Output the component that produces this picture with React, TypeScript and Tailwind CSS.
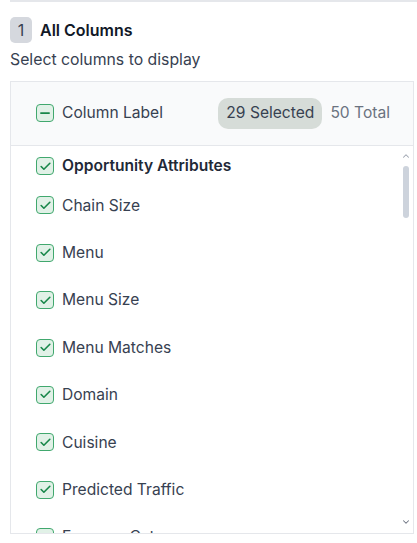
import { Check, Minus, ChevronUp, ChevronDown } from "lucide-react";

const items = [
  "Chain Size",
  "Menu",
  "Menu Size",
  "Menu Matches",
  "Domain",
  "Cuisine",
  "Predicted Traffic",
  "Expense Category",
];

function Box({ mixed }: { mixed?: boolean }) {
  return (
    <span className="flex h-[18px] w-[18px] shrink-0 items-center justify-center rounded-[4px] border border-[#41a86e] bg-[#e1f1e7] text-[#18874a]">
      {mixed ? (
        <Minus size={14} strokeWidth={3} />
      ) : (
        <Check size={13} strokeWidth={3} />
      )}
    </span>
  );
}

export default function App() {
  return (
    <div className="min-h-screen bg-white font-['Inter',sans-serif] text-[#1f2937]">
      <div className="ml-[10px] h-[3px] border-t-2 border-[#e5e7eb]" />

      <div className="ml-[10px] mt-[14px] flex items-center gap-[8px]">
        <span className="flex h-[26px] w-[22px] items-center justify-center rounded-[5px] bg-[#d5d8de] text-[16px] text-[#374151]">
          1
        </span>
        <span className="text-[16px] font-semibold text-[#111827]">All Columns</span>
      </div>
      <p className="ml-[10px] mt-[5px] text-[15.8px] text-[#374151]">Select columns to display</p>

      <div className="relative ml-[10px] mt-[9px] w-[404px] border border-[#e5e7eb]">
        <div className="flex h-[64px] items-center border-b border-[#e5e7eb] bg-[#f9fafb] pl-[25px] pr-[23px]">
          <Box mixed />
          <span className="ml-[8px] text-[15.6px] text-[#374151]">Column Label</span>
          <span className="ml-auto flex h-[31px] items-center rounded-[10px] bg-[#d6dcd8] px-[8px] text-[15.6px] text-[#374151]">
            29 Selected
          </span>
          <span className="ml-[8px] text-[15.6px] text-[#6b7280]">50 Total</span>
        </div>

        <div className="h-[387px] overflow-hidden pl-[25px]">
          <div className="flex h-[36px] items-center gap-[8px] pt-[5px]">
            <Box />
            <span className="text-[15.6px] font-semibold text-[#1f2937]">Opportunity Attributes</span>
          </div>
          {items.map((it) => (
            <div key={it} className="flex h-[47.4px] items-center gap-[8px]">
              <Box />
              <span className="text-[15.6px] text-[#374151]">{it}</span>
            </div>
          ))}
        </div>

        <div className="absolute bottom-0 right-0 top-[65px] flex w-[14px] flex-col items-center">
          <ChevronUp size={10} strokeWidth={2.5} className="mt-[4px] text-[#9ca3af]" />
          <div className="mt-[5px] h-[52px] w-[6px] rounded-full bg-[#cdd3dc]" />
          <ChevronDown size={10} strokeWidth={2.5} className="mb-[6px] mt-auto text-[#6b7280]" />
        </div>
      </div>
    </div>
  );
}
